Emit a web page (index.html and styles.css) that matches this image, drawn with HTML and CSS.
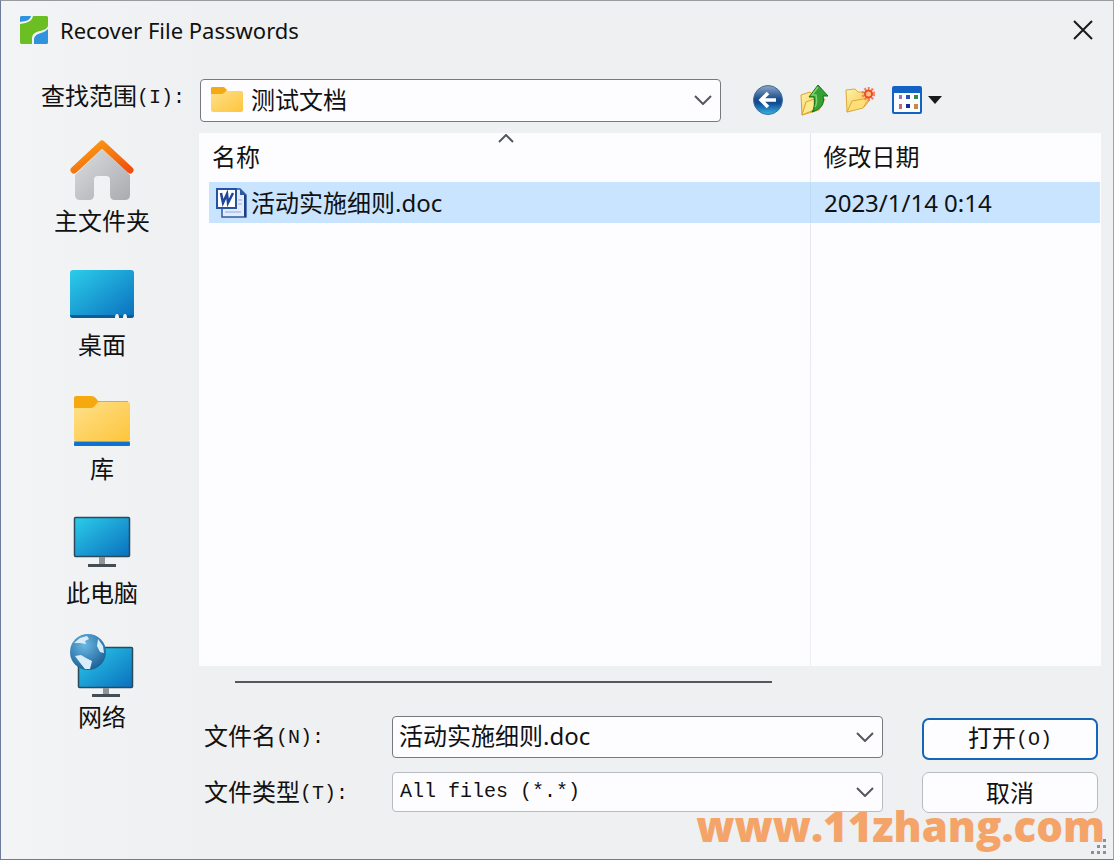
FILE: index.html
```html
<!DOCTYPE html>
<html lang="zh-CN">
<head>
    <meta charset="UTF-8">
    <meta name="viewport" content="width=device-width, initial-scale=1.0">
    <title>Recover File Passwords</title>
    <link rel="stylesheet" href="styles.css">
</head>
<body>

    <!-- shared gradients -->
    <svg class="defs" width="0" height="0" aria-hidden="true">
        <defs>
            <linearGradient id="screen" x1="0" y1="0" x2="1" y2="1">
                <stop offset="0" stop-color="#2ccdea"/>
                <stop offset="1" stop-color="#0a6fbe"/>
            </linearGradient>
            <linearGradient id="folder" x1="0" y1="0" x2="1" y2="1">
                <stop offset="0" stop-color="#ffe08a"/>
                <stop offset="1" stop-color="#fdc53c"/>
            </linearGradient>
            <linearGradient id="roof" x1="0" y1="0" x2="1" y2="1">
                <stop offset="0" stop-color="#fba313"/>
                <stop offset="1" stop-color="#f0500f"/>
            </linearGradient>
            <linearGradient id="wall" x1="0" y1="0" x2="1" y2="1">
                <stop offset="0" stop-color="#dcdde0"/>
                <stop offset="1" stop-color="#a9abb0"/>
            </linearGradient>
            <linearGradient id="back" x1="0" y1="0" x2="0" y2="1">
                <stop offset="0" stop-color="#8fa9c6"/>
                <stop offset="0.45" stop-color="#1d4f8f"/>
                <stop offset="0.6" stop-color="#114a90"/>
                <stop offset="1" stop-color="#35b4e6"/>
            </linearGradient>
            <linearGradient id="paper" x1="0" y1="0" x2="1" y2="1">
                <stop offset="0" stop-color="#fff3a8"/>
                <stop offset="1" stop-color="#f3bf45"/>
            </linearGradient>
            <radialGradient id="globe" cx="0.4" cy="0.3" r="0.7">
                <stop offset="0" stop-color="#6cb9e4"/>
                <stop offset="1" stop-color="#1c6398"/>
            </radialGradient>
        </defs>
    </svg>

    <div class="dialog">
        <header class="titlebar">
            <svg width="28" height="28" viewBox="0 0 28 28">
                <path fill="#2f93dd" d="M1 0h10c-1 4-4 5-11 6V1z"/>
                <path fill="#6cbf22" d="M0 8c8-1 12-3 13-8h14l1 1v9c-1 3-4 4-8 5-5 1-8 3-8 8v5H1l-1-1z"/>
                <path fill="#2f93dd" d="M14 28v-4c0-4 3-6 7-7 3-1 5-2 7-4v14l-1 1z"/>
            </svg>
            <h1>Recover File Passwords</h1>
            <button class="close" aria-label="关闭">
                <svg width="20" height="20" viewBox="0 0 20 20"><path d="M1 1l18 18M19 1L1 19" stroke="#1a1a1a" stroke-width="2" fill="none"/></svg>
            </button>
        </header>

        <div class="lookin">
            <label for="range">查找范围<span class="mono">(I):</span></label>
            <div class="combo combo-folder">
                <svg class="combo-icon" width="32" height="26" viewBox="0 0 32 26">
                    <path fill="#f5a913" d="M0 2q0-2 2-2h10l4 4H28q3 0 3 3v3H0z"/>
                    <rect x="0" y="4" width="32" height="21" rx="2" fill="url(#folder)"/>
                    <path fill="#f5a913" d="M0 2q0-2 2-2h11l3 3-3 3q-1 1-3 1H0z"/>
                </svg>
                <select id="range">
                    <option>测试文档</option>
                </select>
                <svg class="chevron" width="18" height="10" viewBox="0 0 18 10"><path d="M1 1l8 8 8-8"/></svg>
            </div>
            <div class="tools">
                <button aria-label="后退">
                    <svg width="30" height="30" viewBox="0 0 30 30">
                        <circle cx="15" cy="15" r="14.500" fill="url(#back)" stroke="#3d6c9b"/>
                        <path d="M23 15H9M15 8l-7 7 7 7" fill="none" stroke="#fff" stroke-width="3.500"/>
                    </svg>
                </button>
                <button aria-label="向上一级">
                    <svg width="28" height="32" viewBox="0 0 28 32">
                        <path d="M1 11l9-3 2 2 6-1v9l7-3-6 11L2 31z" fill="url(#paper)" stroke="#d9a334"/>
                        <path d="M2 31l4-13 8-3v11z" fill="#ffe98f" stroke="#d9a334"/>
                        <path d="M12 28c3-5 3-10 2-15H9L18 1l10 11h-5c2 8-2 13-11 16z" fill="#35a035" stroke="#13701c"/>
                        <path d="M18 3l-6 8h4c1 5 1 9-1 12" fill="none" stroke="#7ed36a" stroke-width="1.500"/>
                    </svg>
                </button>
                <button aria-label="新建文件夹">
                    <svg width="30" height="26" viewBox="0 0 30 26">
                        <path d="M1 3l9-1 3 3h8l3 9-5 6L2 25z" fill="url(#paper)" stroke="#dda93d"/>
                        <path d="M2 25l5-11 17-3-6 10z" fill="#ffe078" stroke="#dda93d"/>
                        <circle cx="23.500" cy="7" r="5.500" fill="none" stroke="#f4825a" stroke-width="3" stroke-dasharray="2 1.500"/>
                        <circle cx="23.500" cy="7" r="3.500" fill="#ffc48a" stroke="#ee4c22" stroke-width="2"/>
                    </svg>
                </button>
                <button class="view" aria-label="查看">
                    <svg width="50" height="28" viewBox="0 0 50 28">
                        <rect x="1" y="1" width="28" height="26" rx="1" fill="#fbfdff" stroke="#1363c4" stroke-width="2"/>
                        <path d="M1 1h28v6H1z" fill="#1363c4"/>
                        <path d="M7 9h3v4H7z" fill="#9a70b8"/>
                        <path d="M14 9h4v4h-4z" fill="#2c50b4"/>
                        <path d="M22 9h4v4h-4z" fill="#2f8a4c"/>
                        <path d="M7 18h3v5H7z" fill="#cf6468"/>
                        <path d="M14 18h4v4h-4z" fill="#142c96"/>
                        <path d="M22 18h4v5h-4z" fill="#c78a48"/>
                        <path d="M36 10h14l-7 8z" fill="#1a1a1a"/>
                    </svg>
                </button>
            </div>
        </div>

        <div class="content">
            <nav class="places">
                <button>
                    <svg width="64" height="64" viewBox="0 0 64 64">
                        <path fill="url(#wall)" d="M32 11L5 37v20q0 5 5 5h9q5 0 5-5V42q0-4 4-4h8q4 0 4 4v15q0 5 5 5h10q5 0 5-5V37z"/>
                        <path fill="none" stroke="url(#roof)" stroke-width="7" stroke-linecap="round" stroke-linejoin="round" d="M4 32L32 6l28 26"/>
                    </svg>
                    <span>主文件夹</span>
                </button>
                <button>
                    <svg width="64" height="64" viewBox="0 0 64 64">
                        <rect y="8" width="64" height="48" rx="3" fill="url(#screen)"/>
                        <path fill="#0d5c95" d="M0 53h64q0 3-3 3H3q-3 0-3-3z"/>
                        <path fill="#f2f4f6" d="M45 56q0-4 2-4t2 4zM53 56q0-4 2-4t2 4z"/>
                    </svg>
                    <span>桌面</span>
                </button>
                <button>
                    <svg width="64" height="64" viewBox="0 0 64 64">
                        <path fill="#f6a80f" d="M4 12q0-2 2-2h15q4 0 7 5h30v10H4z"/>
                        <path fill="url(#folder)" d="M4 22h17q3 0 6-5 1-1 3-1h28q2 0 2 2v35q0 2-2 2H6q-2 0-2-2z"/>
                        <rect x="4" y="56" width="56" height="4" rx="1" fill="#0f71cf"/>
                        <path fill="#55b9ec" d="M4 55h56v1H4z"/>
                    </svg>
                    <span>库</span>
                </button>
                <button>
                    <svg width="64" height="64" viewBox="0 0 64 64">
                        <rect x="4.500" y="7.500" width="55" height="39" rx="1" fill="url(#screen)" stroke="#2b4a5c" stroke-width="1.500"/>
                        <path fill="#8d959c" d="M29 47h6v7h-6z"/>
                        <path fill="#454d54" d="M18 54h28v3H18z"/>
                    </svg>
                    <span>此电脑</span>
                </button>
                <button>
                    <svg width="64" height="64" viewBox="0 0 64 64">
                        <rect x="8.500" y="13.500" width="54" height="40" rx="1" fill="url(#screen)" stroke="#2b4a5c" stroke-width="1.500"/>
                        <path fill="#8d959c" d="M33 54h6v6h-6z"/>
                        <path fill="#454d54" d="M22 60h28v3H22z"/>
                        <circle cx="18" cy="18" r="18" fill="url(#globe)"/>
                        <path fill="#d9edf8" d="M5 22l6-1 5 3 6 3-2 8-5 0-4-5zM4 9l6-5 7-2 2 3-4 2 1 3-6-1zM28 5l5 7 1 7-4-1-3-6z"/>
                    </svg>
                    <span>网络</span>
                </button>
            </nav>

            <main>
                <div class="files">
                    <table>
                        <thead>
                            <tr>
                                <th>名称
                                    <svg class="sort" width="16" height="9" viewBox="0 0 16 9"><path d="M1 8l7-7 7 7"/></svg>
                                </th>
                                <th>修改日期</th>
                            </tr>
                        </thead>
                        <tbody>
                            <tr class="selected">
                                <td>
                                    <div class="file">
                                        <svg width="32" height="32" viewBox="0 0 32 32">
                                            <path d="M6 2h18l6 6v22H6z" fill="#e3ecfc" stroke="#30589e" stroke-width="1.500"/>
                                            <path d="M29 8v22" stroke="#1d3f86" stroke-width="2"/>
                                            <path d="M24 2v6h6z" fill="#30589e"/>
                                            <path d="M22 13h4M22 17h4M9 25h16" stroke="#93abd8"/>
                                            <rect x="1" y="2" width="19" height="19" fill="#fff" stroke="#2453a6" stroke-width="2"/>
                                            <path d="M5 6l2 10 4-9 1 9 5-10" fill="none" stroke="#1d479c" stroke-width="2.500"/>
                                        </svg>
                                        <span>活动实施细则.doc</span>
                                    </div>
                                </td>
                                <td>2023/1/14 0:14</td>
                            </tr>
                        </tbody>
                    </table>
                </div>
                <div class="scrollbar"><div class="thumb"></div></div>

                <form class="bottom">
                    <label for="filename">文件名<span class="mono">(N):</span></label>
                    <div class="combo combo-name">
                        <input id="filename" type="text" value="活动实施细则.doc">
                        <svg class="chevron" width="18" height="10" viewBox="0 0 18 10"><path d="M1 1l8 8 8-8"/></svg>
                    </div>
                    <button class="btn primary" type="button">打开<span class="mono">(O)</span></button>

                    <label for="filetype">文件类型<span class="mono">(T):</span></label>
                    <div class="combo combo-type">
                        <select id="filetype" class="mono">
                            <option>All files (*.*)</option>
                        </select>
                        <svg class="chevron" width="18" height="10" viewBox="0 0 18 10"><path d="M1 1l8 8 8-8"/></svg>
                    </div>
                    <button class="btn" type="button">取消</button>
                </form>
            </main>
        </div>

        <div class="watermark">www.11zhang.com</div>
        <svg class="grip" width="16" height="16" viewBox="0 0 16 16">
            <path fill="#8c8f96" d="M12 0h3v3h-3zM6 6h3v3H6zM12 6h3v3h-3zM0 12h3v3H0zM6 12h3v3H6zM12 12h3v3h-3z"/>
        </svg>
    </div>

</body>
</html>
```
FILE: styles.css
```css
* {
    box-sizing: border-box;
}

body {
    margin: 0;
    font-family: "Noto Sans", "Noto Sans CJK SC", sans-serif;
    font-size: 24px;
    line-height: 32px;
    color: #111;
}

button, input, select {
    font: inherit;
    color: inherit;
    border: none;
    background: none;
    padding: 0;
    margin: 0;
}

svg {
    display: block;
    flex: none;
}

.defs {
    position: absolute;
}

.mono {
    font-family: "Liberation Mono", monospace;
    font-size: 20px;
    vertical-align: 2px;
}

.dialog {
    position: relative;
    display: flex;
    flex-direction: column;
    min-height: 100vh;
    background: linear-gradient(to right, #f2f4f6, #eff0f2 200px);
    border: 1px solid #9a9ba0;
    border-left-color: #6c7a9c;
    border-right-color: #a79fa8;
    border-bottom-color: #77798a;
}

/* title bar */
.titlebar {
    display: flex;
    align-items: center;
    gap: 12px;
    height: 58px;
    padding: 0 20px 0 19px;
}

.titlebar h1 {
    flex: 1;
    margin: 0;
    font-size: 22px;
    font-weight: normal;
}

/* look in row */
.lookin {
    display: flex;
    align-items: center;
    height: 74px;
    padding: 8px 0 0 40px;
}

.lookin label {
    width: 159px;
    flex: none;
    padding-bottom: 6px;
}

.combo {
    display: grid;
    align-items: center;
    background: #fdfdff;
    border: 1px solid #77797e;
    border-radius: 4px;
}

.combo > * {
    grid-area: 1 / 1;
}

.combo select, .combo input {
    width: 100%;
    height: 100%;
    padding: 0 40px 0 6px;
    appearance: none;
    outline: none;
}

.combo input {
    padding-bottom: 6px;
}

.combo select {
    padding-left: 7px;
}

.combo .combo-icon {
    margin-left: 10px;
}

.combo.combo-folder {
    flex: 1;
    height: 43px;
}

.combo.combo-folder select {
    padding-left: 50px;
}

.chevron {
    justify-self: end;
    margin-right: 8px;
    pointer-events: none;
}

.chevron path, .sort path {
    fill: none;
    stroke: #55575c;
    stroke-width: 2;
}

.tools {
    display: flex;
    align-items: center;
    gap: 17px;
    width: 392px;
    padding-left: 32px;
}

/* places */
.content {
    flex: 1;
    display: flex;
    padding-right: 12px;
}

.places {
    display: flex;
    flex-direction: column;
    gap: 22px;
    width: 198px;
    flex: none;
    padding: 5px 0 0 4px;
}

.places button {
    display: flex;
    flex-direction: column;
    align-items: center;
}

.places span {
    line-height: 38px;
}

/* file list */
main {
    flex: 1;
    display: flex;
    flex-direction: column;
}

.files {
    flex: 1;
    padding: 0 1px 0 10px;
    background: linear-gradient(#e3e6ea, #eef0f3) 68% 0 / 1px 100% no-repeat content-box, #fdfdff;
    background-position: 67.5% 0, 0 0;
}

table {
    width: 100%;
    table-layout: fixed;
    border-collapse: collapse;
}

th, td {
    padding: 0 0 0 13px;
    text-align: left;
    font-weight: normal;
}

th {
    position: relative;
    height: 49px;
    padding-bottom: 2px;
}

th:first-child {
    width: 67.5%;
    padding-left: 3px;
}

.sort {
    position: absolute;
    top: 1px;
    left: 48%;
}

td {
    height: 41px;
    background: #c9e4ff;
}

td:first-child {
    padding-left: 7px;
    border-right: 1px solid #bfdcf5;
}

.file {
    display: flex;
    align-items: center;
    gap: 3px;
}

.scrollbar {
    padding: 15px 0 33px 36px;
}

.thumb {
    width: 62%;
    height: 2px;
    background: #55575b;
}

/* file name and buttons */
.bottom {
    display: grid;
    grid-template-columns: 188px 1fr 176px;
    grid-template-rows: 42px 41px;
    row-gap: 14px;
    padding: 0 3px 46px 5px;
}

.bottom .combo {
    margin-right: 39px;
}

.bottom label {
    padding-top: 4px;
}

.combo.combo-type {
    height: 40px;
    border-color: #b9bbc0;
}

.btn {
    background: #fdfdff;
    border: 1px solid #b9bbc0;
    border-radius: 7px;
}

.btn.primary {
    border: 2px solid #1467b8;
    position: relative;
    top: 2px;
}

.watermark {
    position: absolute;
    right: 8px;
    bottom: 12px;
    font-family: "Open Sans", sans-serif;
    font-size: 42px;
    line-height: 42px;
    font-weight: 800;
    color: #f4a468;
    pointer-events: none;
}

.grip {
    position: absolute;
    right: 6px;
    bottom: 4px;
}
```
